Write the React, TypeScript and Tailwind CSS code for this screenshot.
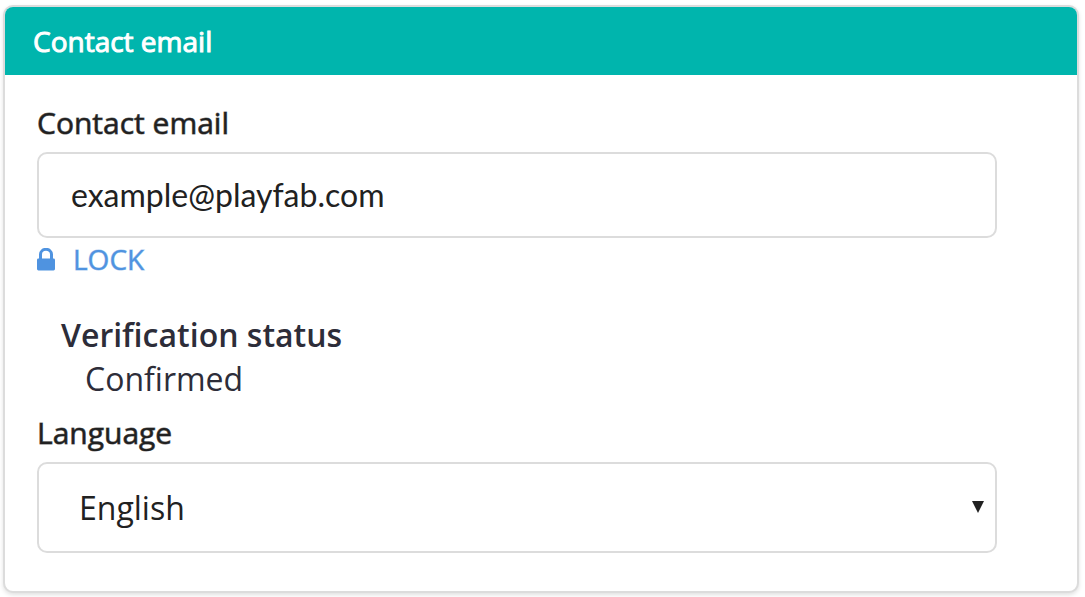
import React from "react";

const languages = ["English", "French", "German", "Spanish"];

function LockIcon() {
  return (
    <svg viewBox="0 0 18 23" className="h-[23px] w-[18px]" fill="none" aria-hidden="true">
      <path d="M3.5 12V6.3a5.5 5 0 0 1 11 0V12" stroke="currentColor" strokeWidth="3" />
      <rect x="0" y="10.5" width="18" height="12" rx="1.4" fill="currentColor" />
    </svg>
  );
}

export default function App() {
  return (
    <main className="bg-white px-[3px] py-[5px] pr-[6px] font-['Open_Sans',sans-serif] text-[#212121]">
      <section className="overflow-hidden rounded-[10px] border-2 border-[#dcdcdc] bg-white shadow-[0_2px_4px_rgba(0,0,0,0.12)]">
        <header className="flex h-[68px] items-center bg-[#00b5ad] px-7">
          <h2 className="text-[28px] leading-10 font-normal text-white [-webkit-text-stroke:1px_#ffffff]">Contact email</h2>
        </header>
        <form className="pt-7 pr-20 pb-[38px] pl-8" onSubmit={(e) => e.preventDefault()}>
          <label htmlFor="email" className="block text-[30px] leading-10 font-normal [-webkit-text-stroke:1px_#212121a0]">
            Contact email
          </label>
          <input
            id="email"
            type="email"
            defaultValue="example@playfab.com"
            className="mt-[9px] block h-[86px] w-full rounded-[10px] border-2 border-[#dcdcdc] bg-white px-8 pb-[2px] font-['Lato',sans-serif] text-[32px] outline-none"
          />
          <button type="button" className="mt-px flex h-10 items-center gap-[18px] text-[28px] leading-10 font-normal text-[#4f93e0] [-webkit-text-stroke:1px_#4f93e080]">
            <LockIcon />
            LOCK
          </button>
          <dl className="mt-[34px] pl-6 text-[32px] leading-[44px] text-[#2d2d39]">
            <dt className="font-semibold">Verification status</dt>
            <dd className="pl-6 font-normal">Confirmed</dd>
          </dl>
          <label htmlFor="language" className="mt-3 block text-[30px] leading-10 font-normal [-webkit-text-stroke:1px_#212121a0]">
            Language
          </label>
          <div className="relative mt-[9px]">
            <select
              id="language"
              defaultValue="English"
              className="block h-[91px] w-full appearance-none rounded-[10px] border-2 border-[#dcdcdc] bg-white pr-12 pl-10 text-[32px] font-normal outline-none"
            >
              {languages.map((name) => (
                <option key={name}>{name}</option>
              ))}
            </select>
            <svg viewBox="0 0 12 12" className="pointer-events-none absolute top-[39px] right-[13px] h-3 w-3" aria-hidden="true">
              <path d="M0 0h12L6 12z" fill="#212121" />
            </svg>
          </div>
        </form>
      </section>
    </main>
  );
}
